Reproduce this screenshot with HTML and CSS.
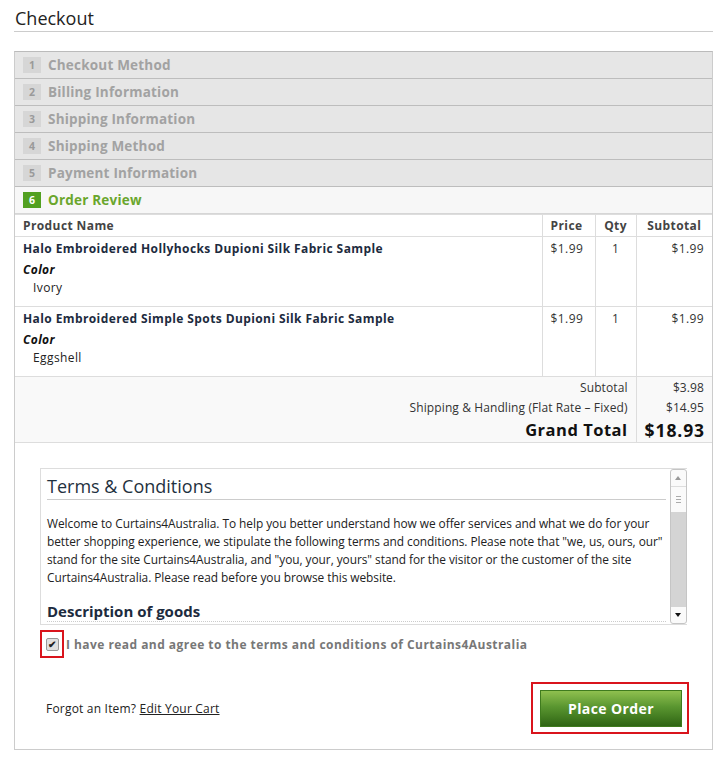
FILE: index.html
```html
<!DOCTYPE html>
<html lang="en">
<head>
    <meta charset="UTF-8">
    <title>Checkout</title>
    <link rel="stylesheet" href="styles.css">
</head>
<body>
    <main class="page">
        <h1 class="pageTitle">Checkout</h1>

        <div class="checkout">
            <ol class="steps">
                <li class="step"><span class="num">1</span>Checkout Method</li>
                <li class="step"><span class="num">2</span>Billing Information</li>
                <li class="step"><span class="num">3</span>Shipping Information</li>
                <li class="step"><span class="num">4</span>Shipping Method</li>
                <li class="step"><span class="num">5</span>Payment Information</li>
                <li class="step active"><span class="num">6</span>Order Review</li>
            </ol>

            <table class="review">
                <thead>
                    <tr>
                        <th class="name">Product Name</th>
                        <th class="price">Price</th>
                        <th class="qty">Qty</th>
                        <th class="sub">Subtotal</th>
                    </tr>
                </thead>
                <tbody>
                    <tr>
                        <td class="name">
                            <div class="prodName">Halo Embroidered Hollyhocks Dupioni Silk Fabric Sample</div>
                            <div class="optLabel">Color</div>
                            <div class="optValue">Ivory</div>
                        </td>
                        <td class="price">$1.99</td>
                        <td class="qty">1</td>
                        <td class="sub">$1.99</td>
                    </tr>
                    <tr>
                        <td class="name">
                            <div class="prodName">Halo Embroidered Simple Spots Dupioni Silk Fabric Sample</div>
                            <div class="optLabel">Color</div>
                            <div class="optValue">Eggshell</div>
                        </td>
                        <td class="price">$1.99</td>
                        <td class="qty">1</td>
                        <td class="sub">$1.99</td>
                    </tr>
                </tbody>
                <tfoot>
                    <tr class="first">
                        <td colspan="3" class="label">Subtotal</td>
                        <td class="sub">$3.98</td>
                    </tr>
                    <tr>
                        <td colspan="3" class="label">Shipping &amp; Handling (Flat Rate &ndash; Fixed)</td>
                        <td class="sub">$14.95</td>
                    </tr>
                    <tr class="grand">
                        <td colspan="3" class="label">Grand Total</td>
                        <td class="sub">$18.93</td>
                    </tr>
                </tfoot>
            </table>

            <div class="agreements">
                <div class="terms">
                    <div class="termsText">
                        <h2>Terms &amp; Conditions</h2>
                        <p>Welcome to Curtains4Australia. To help you better understand how we offer services and what we do for your better shopping experience, we stipulate the following terms and conditions. Please note that "we, us, ours, our" stand for the site Curtains4Australia, and "you, your, yours" stand for the visitor or the customer of the site Curtains4Australia. Please read before you browse this website.</p>
                        <h3>Description of goods</h3>
                    </div>
                    <div class="scrollbar">
                        <div class="arrow up"></div>
                        <div class="thumb"><span></span><span></span><span></span></div>
                        <div class="track"></div>
                        <div class="arrow down"></div>
                    </div>
                </div>

                <label class="agree">
                    <span class="highlight"><span class="checkbox">&#10004;</span></span>
                    I have read and agree to the terms and conditions of Curtains4Australia
                </label>
            </div>

            <div class="actions">
                <p class="forgot">Forgot an Item? <a href="#">Edit Your Cart</a></p>
                <div class="highlight btnWrap">
                    <button class="placeOrder">Place Order</button>
                </div>
            </div>
        </div>
    </main>
</body>
</html>
```

FILE: styles.css
```css
body{
    margin: 0;
    font-family: "Open Sans", "Noto Sans", sans-serif;
    color: #222;
    background: #fff;
}

.page{
    width: 699px;
    padding: 7px 0 0 14px;
}

.pageTitle{
    margin: 0 0 19px 0;
    padding: 0 0 1px 1px;
    font-size: 18px;
    font-weight: normal;
    line-height: 23px;
    color: #222;
    border-bottom: 1px solid #ccc;
}

.checkout{
    border: 1px solid #ccc;
    border-top: 1px solid #bbb;
}

/* steps */
.steps{
    list-style: none;
    margin: 0;
    padding: 0;
}

.step{
    display: flex;
    align-items: center;
    height: 26px;
    padding-left: 8px;
    background: #e6e6e6;
    border-bottom: 1px solid #bdbdbd;
    font-size: 13.5px;
    font-weight: bold;
    color: #a2a2a2;
    letter-spacing: 0.2px;
}

.num{
    width: 18px;
    height: 16px;
    line-height: 16px;
    margin-right: 7px;
    background: #d6d6d6;
    text-align: center;
    font-size: 10.5px;
    color: #9a9a9a;
}

.step.active{
    background: #f7f7f7;
    color: #6aa62c;
    border-bottom: 1px solid #d6d6d6;
}

.step.active .num{
    background: #52a021;
    color: #fff;
}

/* order review table */
.review{
    width: 100%;
    border-collapse: collapse;
    font-size: 12px;
    letter-spacing: 0.4px;
}

.review th{
    height: 21px;
    padding: 0 8px;
    font-weight: bold;
    color: #444;
    text-align: left;
    border-bottom: 1px solid #ddd;
    border-top: 1px solid #ddd;
}

.review th.price, .review td.price{
    width: 36px;
    border-left: 1px solid #ddd;
}

.review th.qty, .review td.qty{
    width: 24px;
    text-align: center;
    border-left: 1px solid #ddd;
}

.review th.sub, .review td.sub{
    width: 59px;
    text-align: right;
    border-left: 1px solid #ddd;
}

.review th.sub{
    text-align: center;
}

.review tbody td{
    height: 66px;
    padding: 3px 8px 0 8px;
    vertical-align: top;
    border-bottom: 1px solid #ddd;
    color: #333;
}

.prodName{
    font-weight: bold;
    color: #1d2b3e;
    line-height: 17px;
}

.optLabel{
    margin-top: 5px;
    font-style: italic;
    font-weight: bold;
    color: #111;
    line-height: 16px;
}

.optValue{
    padding-left: 10px;
    color: #222;
    line-height: 19px;
}

.review tfoot td{
    background: #f9f9f9;
    padding: 0 8px;
    text-align: right;
    height: 20px;
    color: #333;
    letter-spacing: 0.1px;
}

.review tfoot tr.first td{
    height: 19px;
    padding-top: 1px;
}

.review tfoot td.label{
    border-left: none;
}

.review tfoot tr.grand td{
    height: 25px;
    font-size: 16.5px;
    font-weight: bold;
    letter-spacing: 0.5px;
    color: #111;
    border-bottom: 1px solid #ddd;
}

.review tfoot tr.grand td.sub{
    font-size: 17.5px;
    letter-spacing: 0.9px;
    padding-right: 7px;
}

/* terms */
.agreements{
    padding: 25px 25px 0 25px;
}

.terms{
    display: flex;
    height: 155px;
    border: 1px solid #ddd;
    border-right: none;
}

.termsText{
    flex: 1;
    overflow: hidden;
    padding: 0 4px 0 6px;
}

.termsText h2{
    margin: 5px 0 0 0;
    padding-bottom: 1px;
    font-size: 18px;
    font-weight: normal;
    line-height: 24px;
    color: #1f3140;
    border-bottom: 1px solid #ccc;
}

.termsText p{
    margin: 14px 0 0 0;
    font-size: 11.9px;
    letter-spacing: -0.05px;
    line-height: 18px;
    color: #222;
}

.termsText h3{
    margin: 15px 0 0 0;
    font-size: 15px;
    line-height: 20px;
    color: #1d2b3e;
    border-bottom: 1px dotted #ccc;
}

.scrollbar{
    width: 15px;
    display: flex;
    flex-direction: column;
    border: 1px solid #c5c5c5;
    border-radius: 3px;
    background: #fafafa;
}

.arrow{
    height: 16px;
    position: relative;
}

.arrow.up::after, .arrow.down::after{
    content: "";
    position: absolute;
    left: 4px;
    border-left: 3px solid transparent;
    border-right: 3px solid transparent;
}

.arrow.up::after{
    top: 6px;
    border-bottom: 4px solid #999;
}

.arrow.down::after{
    top: 6px;
    border-top: 4px solid #111;
}

.thumb{
    height: 25px;
    display: flex;
    flex-direction: column;
    justify-content: center;
    align-items: center;
    gap: 2px;
    border-top: 1px solid #ddd;
}

.thumb span{
    width: 5px;
    height: 1px;
    background: #aaa;
}

.track{
    flex: 1;
    background: #d4d4d4;
}

.agree{
    display: flex;
    align-items: center;
    gap: 2px;
    margin-top: 5px;
    font-size: 12px;
    font-weight: bold;
    letter-spacing: 0.45px;
    color: #777;
}

.highlight{
    border: 2px solid #d9141c;
}

.agree .highlight{
    width: 20px;
    height: 24px;
    display: flex;
    align-items: center;
    justify-content: center;
}

.checkbox{
    width: 11px;
    height: 11px;
    border: 1px solid #999;
    border-radius: 2px;
    background: #e0e0e0;
    font-size: 10px;
    line-height: 11px;
    text-align: center;
    color: #222;
    letter-spacing: 0;
}

/* actions */
.actions{
    display: flex;
    justify-content: space-between;
    align-items: center;
    padding: 24px 23px 15px 31px;
}

.forgot{
    margin: 0;
    font-size: 12px;
    letter-spacing: 0.2px;
    color: #222;
}

.forgot a{
    color: #222;
}

.btnWrap{
    padding: 6px 5px 5px 7px;
}

.placeOrder{
    display: block;
    width: 142px;
    height: 37px;
    border: 1px solid #3f7b1e;
    background: linear-gradient(#8fc04f, #5a9630 45%, #2f6514);
    color: #fff;
    font-family: inherit;
    font-size: 14px;
    font-weight: bold;
    letter-spacing: 0.4px;
    cursor: pointer;
}
```
